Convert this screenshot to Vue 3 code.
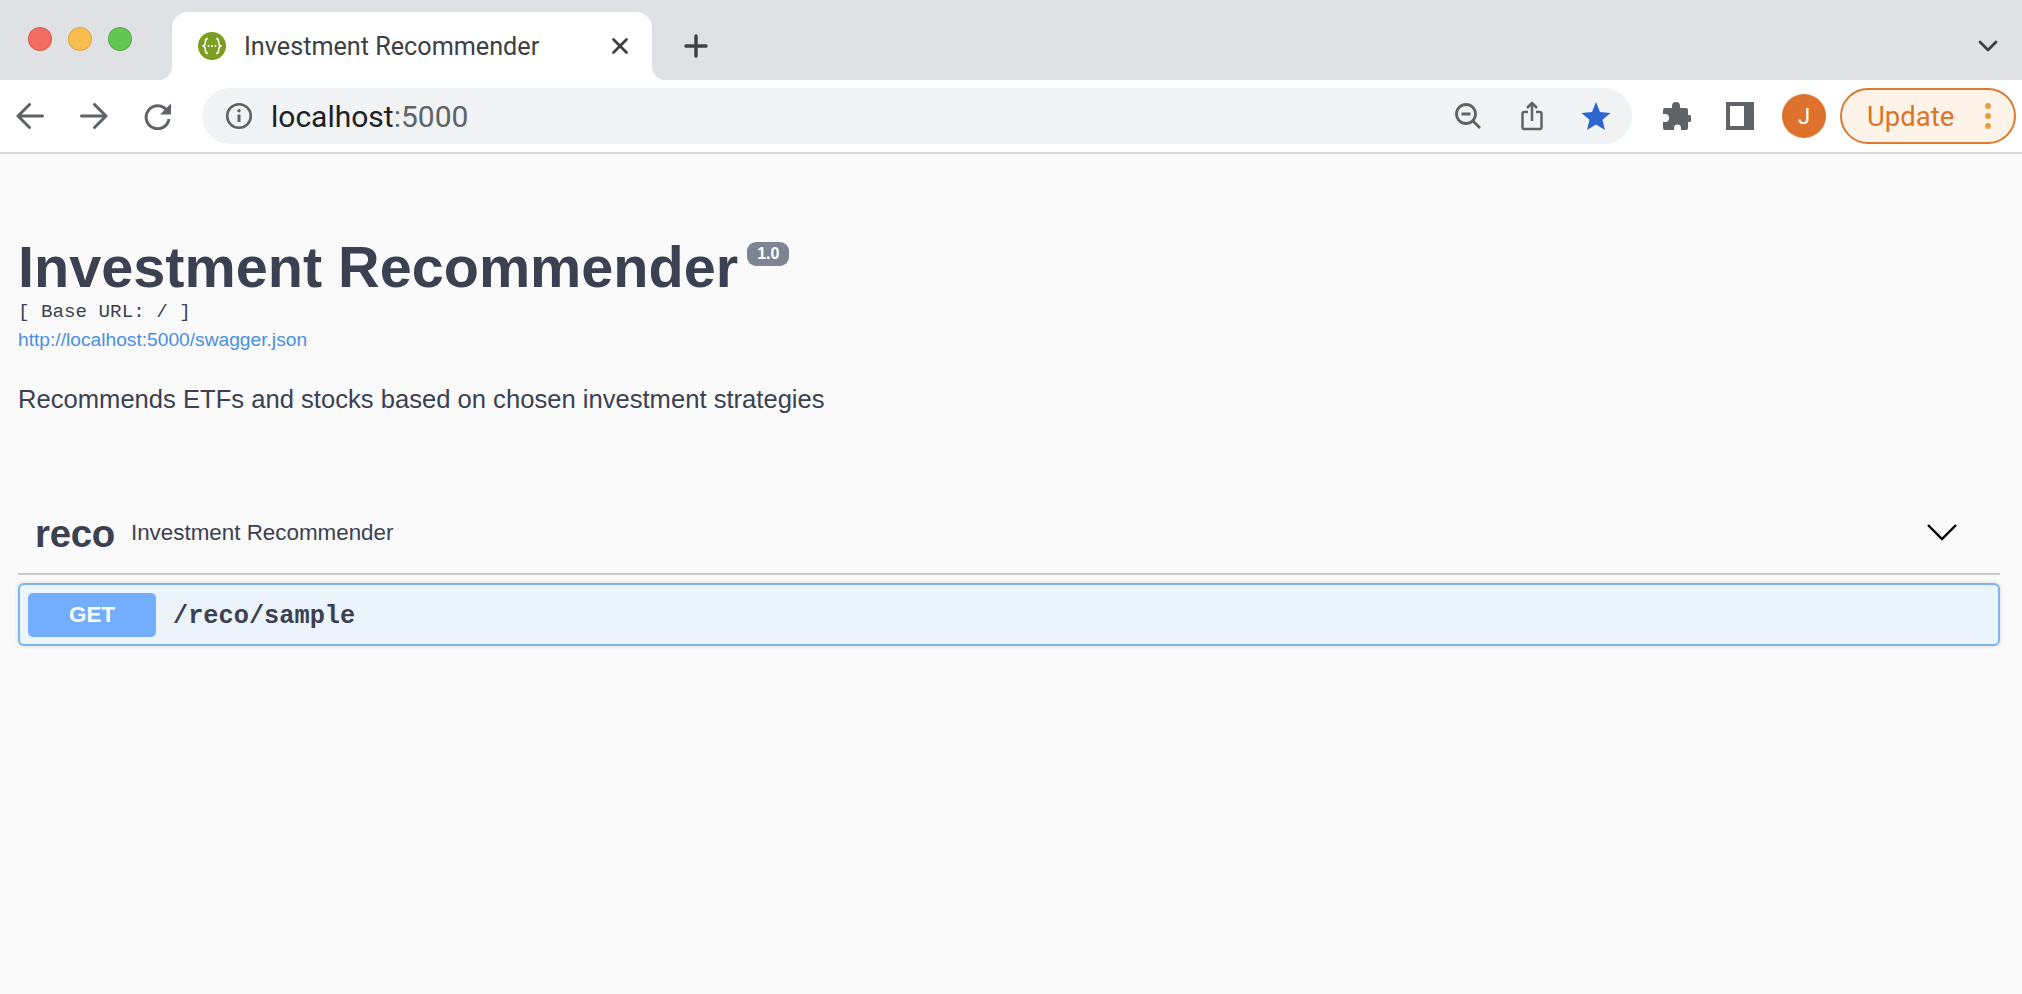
<template>
  <div class="window">
    <div class="tabstrip">
      <div class="lights">
        <span class="light red"></span>
        <span class="light yellow"></span>
        <span class="light green"></span>
      </div>
      <div class="tab">
        <svg class="favicon" width="28" height="28" viewBox="0 0 28 28">
          <circle cx="14" cy="14" r="14" fill="#7d9c22" />
          <path d="M10 6.500c-2.500 0-2.600 1.400-2.600 3.200 0 2-.4 3.600-2 4.300 1.600.7 2 2.300 2 4.300 0 1.800.1 3.200 2.600 3.200M18 6.500c2.500 0 2.600 1.400 2.600 3.200 0 2 .4 3.600 2 4.300-1.600.7-2 2.300-2 4.300 0 1.800-.1 3.200-2.600 3.200" fill="none" stroke="#fff" stroke-width="1.500" />
          <circle cx="10.500" cy="14" r="1" fill="#fff" />
          <circle cx="14" cy="14" r="1" fill="#fff" />
          <circle cx="17.500" cy="14" r="1" fill="#fff" />
        </svg>
        <span class="tab-title">{{ title }}</span>
        <svg class="tab-close" width="18" height="18" viewBox="0 0 18 18">
          <path d="M2.500 2.500l13 13M15.500 2.500l-13 13" stroke="#3c4043" stroke-width="2.800" stroke-linecap="round" />
        </svg>
      </div>
      <svg class="new-tab" width="24" height="24" viewBox="0 0 24 24">
        <path d="M12 2v20M2 12h20" stroke="#3c4043" stroke-width="3.400" stroke-linecap="round" />
      </svg>
      <svg class="tab-menu" width="20" height="14" viewBox="0 0 20 14">
        <path d="M2 3l8 8 8-8" fill="none" stroke="#3c4043" stroke-width="2.800" stroke-linecap="round" stroke-linejoin="round" />
      </svg>
    </div>

    <div class="toolbar">
      <button class="tool">
        <svg width="28" height="26" viewBox="0 0 28 26">
          <path d="M26.500 13H3M13.500 1.500L2 13l11.500 11.500" fill="none" stroke="#5f6368" stroke-width="3" stroke-linecap="round" stroke-linejoin="round" />
        </svg>
      </button>
      <button class="tool">
        <svg width="28" height="26" viewBox="0 0 28 26">
          <path d="M1.500 13H25M14.500 1.500L26 13 14.500 24.500" fill="none" stroke="#5f6368" stroke-width="3" stroke-linecap="round" stroke-linejoin="round" />
        </svg>
      </button>
      <button class="tool">
        <svg width="28" height="28" viewBox="0 0 28 28">
          <path d="M23 8.500A11.500 11.500 0 1 0 25 17" fill="none" stroke="#5f6368" stroke-width="3" />
          <path d="M27 1.500v11H16z" fill="#5f6368" />
        </svg>
      </button>

      <div class="omnibox">
        <svg class="info" width="28" height="28" viewBox="0 0 28 28">
          <circle cx="14" cy="14" r="11.800" fill="none" stroke="#5f6368" stroke-width="2.600" />
          <path d="M14 12.500v7.500" stroke="#5f6368" stroke-width="3" />
          <circle cx="14" cy="8.800" r="1.700" fill="#5f6368" />
        </svg>
        <span class="url">localhost<span class="port">:5000</span></span>
        <div class="omni-actions">
          <button class="tool">
            <svg width="28" height="28" viewBox="0 0 28 28">
              <circle cx="12" cy="12" r="9.500" fill="none" stroke="#5f6368" stroke-width="2.800" />
              <path d="M7.500 12h9M19 19l7 7" fill="none" stroke="#5f6368" stroke-width="2.800" />
            </svg>
          </button>
          <button class="tool">
            <svg width="22" height="30" viewBox="0 0 22 30">
              <path d="M7 11H3a1.500 1.500 0 0 0-1.500 1.500v14A1.500 1.500 0 0 0 3 28h16a1.500 1.500 0 0 0 1.500-1.500v-14A1.500 1.500 0 0 0 19 11h-4M11 20V2M6 7l5-5 5 5" fill="none" stroke="#5f6368" stroke-width="2.500" stroke-linejoin="round" />
            </svg>
          </button>
          <button class="tool">
            <svg width="30" height="30" viewBox="0 0 30 30">
              <path d="M15 1l4 10 10.500.9-8 6.800 2.500 10.300L15 23.500 6 29l2.500-10.300-8-6.800L11 11z" fill="#2e66d0" />
            </svg>
          </button>
        </div>
      </div>

      <button class="tool ext">
        <svg width="30" height="30" viewBox="0 0 30 30">
          <path d="M11 5a4 4 0 0 1 8 0v2h6a2 2 0 0 1 2 2v5h1a3.500 3.500 0 0 1 0 7h-1v6a2 2 0 0 1-2 2h-5v-2a3.500 3.500 0 0 0-7 0v2H4a2 2 0 0 1-2-2v-6h2a4 4 0 0 0 0-8H2V9a2 2 0 0 1 2-2h7z" fill="#5f6368" />
        </svg>
      </button>
      <button class="tool">
        <span class="side-panel"></span>
      </button>
      <button class="tool">
        <span class="avatar">J</span>
      </button>
      <div class="update">
        <span>Update</span>
        <span class="update-dots"><i></i><i></i><i></i></span>
      </div>
    </div>

    <div class="page">
      <div class="info-block">
        <div class="heading">
          <h1>{{ title }}</h1>
          <span class="version">1.0</span>
        </div>
        <div class="base-url">[ Base URL: / ]</div>
        <a class="spec-link" href="#">http://localhost:5000/swagger.json</a>
        <p class="description">Recommends ETFs and stocks based on chosen investment strategies</p>
      </div>

      <div class="section">
        <span class="section-name">reco</span>
        <span class="section-desc">{{ title }}</span>
        <svg class="expand" width="32" height="18" viewBox="0 0 32 18">
          <path d="M2 2l14 14L30 2" fill="none" stroke="#000" stroke-width="2.400" />
        </svg>
      </div>

      <div class="operation">
        <span class="method">GET</span>
        <span class="path">/reco/sample</span>
      </div>
    </div>
  </div>
</template>

<script setup>
const title = 'Investment Recommender'
</script>

<style>
html,
body {
  margin: 0;
  background: #fafafa;
}
</style>

<style scoped>
.window {
  width: 2022px;
  height: 994px;
  overflow: hidden;
  background: #fafafa;
  font-family: "Liberation Sans", Arial, sans-serif;
  color: #3b4151;
}

.tabstrip {
  display: flex;
  align-items: flex-end;
  height: 80px;
  background: #dfe1e5;
}
.lights {
  display: flex;
  gap: 16px;
  align-self: flex-start;
  padding: 27px 0 0 28px;
}
.light {
  width: 24px;
  height: 24px;
  border-radius: 50%;
  box-sizing: border-box;
  border: 1px solid rgba(0, 0, 0, 0.12);
}
.red { background: #f26d5f; }
.yellow { background: #f8bd4f; }
.green { background: #62c554; }

.tab {
  position: relative;
  display: flex;
  align-items: center;
  width: 480px;
  height: 68px;
  margin-left: 40px;
  padding: 0 23px 0 26px;
  box-sizing: border-box;
  background: #fff;
  border-radius: 16px 16px 0 0;
  font-family: Roboto, sans-serif;
  font-size: 25.200px;
  color: #3c4043;
}
.tab::before,
.tab::after {
  content: "";
  position: absolute;
  bottom: 0;
  width: 14px;
  height: 14px;
}
.tab::before {
  left: -14px;
  background: radial-gradient(circle at 0 0, transparent 14px, #fff 14.500px);
}
.tab::after {
  right: -14px;
  background: radial-gradient(circle at 100% 0, transparent 14px, #fff 14.500px);
}
.favicon { flex: none; }
.tab-title {
  margin-left: 18px;
  flex: 1;
  white-space: nowrap;
}
.tab-close { flex: none; }
.new-tab {
  align-self: flex-start;
  margin: 34px 0 0 32px;
}
.tab-menu {
  align-self: flex-start;
  margin: 39px 24px 0 auto;
}

.toolbar {
  display: flex;
  align-items: center;
  height: 72px;
  background: #fff;
  border-bottom: 2px solid #dadada;
}
.tool {
  flex: none;
  display: flex;
  align-items: center;
  justify-content: center;
  width: 64px;
  height: 56px;
  padding: 0;
  border: none;
  background: none;
}
.toolbar > .tool:first-child { margin-left: -2px; }
.omnibox {
  flex: 1;
  display: flex;
  align-items: center;
  height: 56px;
  margin-left: 12px;
  padding: 0 4px 0 23px;
  background: #f1f3f4;
  border-radius: 28px;
}
.info { flex: none; }
.url {
  margin-left: 18px;
  font-family: Roboto, sans-serif;
  font-size: 30px;
  color: #202124;
}
.port { color: #5f6368; }
.omni-actions {
  display: flex;
  margin-left: auto;
}
.ext { margin-left: 12px; }
.side-panel {
  display: block;
  width: 28px;
  height: 28px;
  box-sizing: border-box;
  border: 4px solid #5f6368;
  border-right-width: 10px;
  background: #fff;
}
.avatar {
  display: flex;
  align-items: center;
  justify-content: center;
  width: 44px;
  height: 44px;
  border-radius: 50%;
  background: #de722c;
  color: #fff;
  font-family: Roboto, sans-serif;
  font-size: 22px;
}
.update {
  flex: none;
  display: flex;
  align-items: center;
  width: 176px;
  height: 56px;
  margin: 0 6px 0 4px;
  padding: 0 23px 0 25px;
  box-sizing: border-box;
  border: 2px solid #dc7a33;
  border-radius: 28px;
  background: #fdf3e9;
  color: #dc7428;
  font-family: Roboto, sans-serif;
  font-size: 27.500px;
}
.update-dots {
  display: flex;
  flex-direction: column;
  gap: 4px;
  margin-left: auto;
}
.update-dots i {
  width: 6px;
  height: 6px;
  border-radius: 50%;
  background: #e9a03c;
}

.page {
  padding: 0 22px 0 18px;
}
.info-block {
  padding-top: 80px;
}
.heading {
  display: flex;
  align-items: flex-start;
}
h1 {
  margin: 0;
  font-size: 57.600px;
  line-height: 66px;
  font-weight: 700;
  color: #3b4151;
}
.version {
  margin: 8px 0 0 9px;
  padding: 0 10px;
  height: 24px;
  line-height: 24px;
  border-radius: 9px;
  background: #7d8492;
  color: #fff;
  font-size: 16px;
  font-weight: 700;
}
.base-url {
  font-family: "Liberation Mono", monospace;
  font-size: 19.200px;
  line-height: 24px;
  color: #3b4151;
}
.spec-link {
  display: block;
  margin-top: 3px;
  font-size: 19.200px;
  line-height: 26px;
  color: #4990e2;
  text-decoration: none;
}
.description {
  margin: 30px 0 0;
  font-size: 25.600px;
  line-height: 32px;
  color: #3b4151;
}

.section {
  display: flex;
  align-items: center;
  height: 68px;
  margin-top: 85px;
  padding: 0 42px 5px 17px;
  border-bottom: 2px solid #c9cacd;
}
.section-name {
  font-size: 38.400px;
  font-weight: 700;
  letter-spacing: -0.300px;
}
.section-desc {
  margin-left: 16px;
  margin-bottom: 2px;
  font-size: 22.400px;
}
.expand {
  margin-left: auto;
  margin-bottom: 5px;
}

.operation {
  display: flex;
  align-items: center;
  height: 63px;
  margin-top: 8px;
  padding: 0 8px;
  box-sizing: border-box;
  border: 2px solid #7ab3f6;
  border-radius: 6px;
  background: #ebf3fb;
  box-shadow: 0 0 4px rgba(0, 0, 0, 0.15);
}
.method {
  width: 128px;
  height: 44px;
  line-height: 44px;
  text-align: center;
  border-radius: 5px;
  background: #72aefb;
  color: #fff;
  font-size: 22.400px;
  font-weight: 700;
}
.path {
  margin-left: 17px;
  padding-top: 3px;
  font-family: "Liberation Mono", monospace;
  font-size: 25.300px;
  font-weight: 700;
}
</style>
